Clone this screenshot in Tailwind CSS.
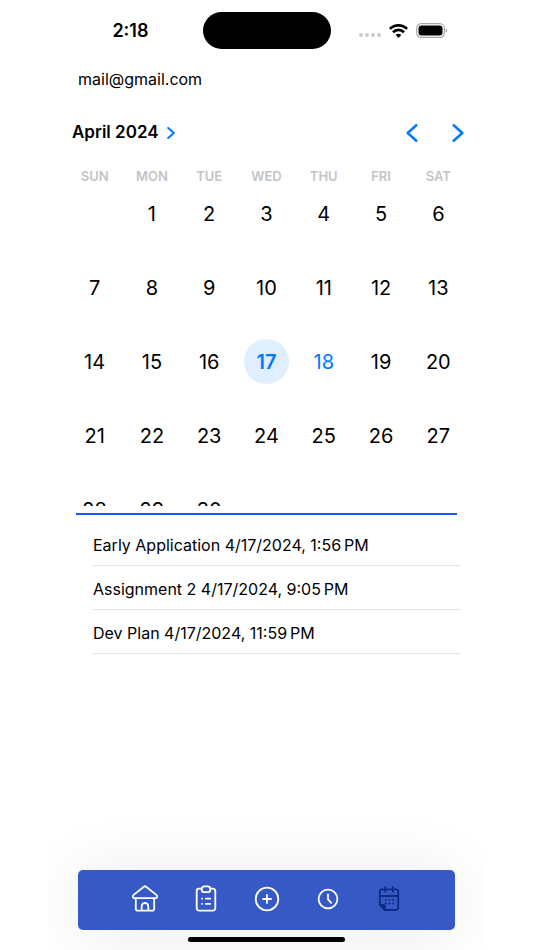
<!DOCTYPE html>
<html lang="en">
<head>
<meta charset="utf-8">
<meta name="viewport" content="width=device-width, initial-scale=1">
<title>Calendar</title>
<script src="https://cdn.jsdelivr.net/npm/@tailwindcss/browser@4"></script>
</head>
<body class="bg-white pr-[49px] pl-12 font-['Inter','Liberation_Sans',sans-serif] text-black">
<div class="flex min-h-screen flex-col overflow-hidden">

  <!-- Status bar -->
  <header class="grid grid-cols-[1fr_auto_1fr] items-center pt-3">
    <div class="pr-[54px] text-right text-lg font-semibold">2:18</div>
    <div class="h-[37px] w-32 rounded-full bg-black"></div>
    <div class="flex items-center gap-2 pl-7">
      <svg class="mt-2 h-1 w-[22px]" viewBox="0 0 22 4" fill="#cbcbcb" aria-hidden="true"><circle cx="2" cy="2" r="2"/><circle cx="8" cy="2" r="2"/><circle cx="14" cy="2" r="2"/><circle cx="20" cy="2" r="2"/></svg>
      <svg class="h-[14px] w-[19px]" viewBox="0 0 19 14" fill="none" stroke="#000" stroke-width="2.7" aria-hidden="true"><path d="M.9 4.9a12.3 12.3 0 0 1 17.2 0"/><path d="M4 8.2a7.8 7.8 0 0 1 11 0"/><path d="M9.5 14 6.7 11a4 4 0 0 1 5.6 0Z" fill="#000" stroke="none"/></svg>
      <svg class="h-[15px] w-8" viewBox="0 0 32 15" aria-hidden="true"><rect x=".7" y=".7" width="27.6" height="13.6" rx="4.6" fill="none" stroke="#a6a6a6" stroke-width="1.2"/><rect x="2.5" y="2.5" width="24" height="10" rx="3" fill="#000"/><path d="M29.6 5.2c2 .6 2 4 0 4.600Z" fill="#a6a6a6"/></svg>
    </div>
  </header>

  <p class="mt-[18px] pl-[30px] text-base leading-6">mail@gmail.com</p>

  <!-- Calendar -->
  <section class="px-[18px]">
    <div class="mt-[26px] flex h-8 items-center justify-between pr-[3px] pl-1.5">
      <button class="flex items-center gap-2 text-[17px] font-semibold">April 2024
        <svg class="h-3 w-2" viewBox="0 0 8 12" fill="none" stroke="#007aff" stroke-width="2" stroke-linecap="round" stroke-linejoin="round" aria-hidden="true"><path d="m1.200 1 5.600 5-5.600 5"/></svg>
      </button>
      <div class="flex gap-[34px]">
        <button aria-label="Previous month"><svg class="h-[18px] w-3" viewBox="0 0 12 18" fill="none" stroke="#007aff" stroke-width="2.500" stroke-linecap="round" stroke-linejoin="round"><path d="M10.300 1.300 1.700 9l8.600 7.700"/></svg></button>
        <button aria-label="Next month"><svg class="h-[18px] w-3" viewBox="0 0 12 18" fill="none" stroke="#007aff" stroke-width="2.500" stroke-linecap="round" stroke-linejoin="round"><path d="m1.700 1.300 8.600 7.700-8.600 7.700"/></svg></button>
      </div>
    </div>
    <div class="mt-[13px] h-[344px] overflow-hidden">
      <table class="w-full table-fixed text-center text-xl">
        <thead>
          <tr class="h-[29px] text-[13px] text-[#c4c4c6]">
            <th class="font-semibold">SUN</th><th class="font-semibold">MON</th><th class="font-semibold">TUE</th><th class="font-semibold">WED</th><th class="font-semibold">THU</th><th class="font-semibold">FRI</th><th class="font-semibold">SAT</th>
          </tr>
        </thead>
        <tbody>
          <tr class="h-[74px] align-top"><td></td><td><button class="size-[45px]">1</button></td><td><button class="size-[45px]">2</button></td><td><button class="size-[45px]">3</button></td><td><button class="size-[45px]">4</button></td><td><button class="size-[45px]">5</button></td><td><button class="size-[45px]">6</button></td></tr>
          <tr class="h-[74px] align-top"><td><button class="size-[45px]">7</button></td><td><button class="size-[45px]">8</button></td><td><button class="size-[45px]">9</button></td><td><button class="size-[45px]">10</button></td><td><button class="size-[45px]">11</button></td><td><button class="size-[45px]">12</button></td><td><button class="size-[45px]">13</button></td></tr>
          <tr class="h-[74px] align-top"><td><button class="size-[45px]">14</button></td><td><button class="size-[45px]">15</button></td><td><button class="size-[45px]">16</button></td><td><button class="size-[45px] rounded-full bg-[#e0efff] font-semibold text-[#007aff]">17</button></td><td><button class="size-[45px] text-[#007aff]">18</button></td><td><button class="size-[45px]">19</button></td><td><button class="size-[45px]">20</button></td></tr>
          <tr class="h-[74px] align-top"><td><button class="size-[45px]">21</button></td><td><button class="size-[45px]">22</button></td><td><button class="size-[45px]">23</button></td><td><button class="size-[45px]">24</button></td><td><button class="size-[45px]">25</button></td><td><button class="size-[45px]">26</button></td><td><button class="size-[45px]">27</button></td></tr>
          <tr class="h-[74px] align-top"><td><button class="size-[45px]">28</button></td><td><button class="size-[45px]">29</button></td><td><button class="size-[45px]">30</button></td><td></td><td></td><td></td><td></td></tr>
        </tbody>
      </table>
    </div>
  </section>

  <hr class="mx-7 mt-[7px] border-t-2 border-[#1a56ff]">

  <ul class="mt-[7px] mr-6 ml-[45px] text-base">
    <li class="flex h-11 items-center border-b border-[#e4e4e6] pt-0.5">Early Application 4/17/2024, 1:56&#8239;PM</li>
    <li class="flex h-11 items-center border-b border-[#e4e4e6] pt-0.5">Assignment 2 4/17/2024, 9:05&#8239;PM</li>
    <li class="flex h-11 items-center border-b border-[#e4e4e6] pt-0.5">Dev Plan 4/17/2024, 11:59&#8239;PM</li>
  </ul>

  <!-- Tab bar -->
  <footer class="mt-auto pb-2">
    <nav class="mx-[30px] flex h-[60px] items-center justify-center rounded-[5px] bg-[#3759c5] pb-[3px] text-white shadow-[0_4px_70px_rgba(0,0,0,0.09)]">
      <button class="flex w-[61px] justify-center" aria-label="Home"><svg class="size-[30px]" viewBox="0 0 30 30" fill="none" stroke="currentColor" stroke-width="1.800" stroke-linecap="round" stroke-linejoin="round"><path d="M13.900 2.700a1.700 1.700 0 0 1 2.200 0l10.300 8.200c1.400 1.200.9 3.300-.9 3.300h-21c-1.800 0-2.300-2.100-.9-3.300ZM5.800 14.200v10.500c0 1.200.7 1.900 1.900 1.900h14.600c1.200 0 1.900-.7 1.900-1.900V14.200M11.700 26.600v-4.300a3.300 3.300 0 0 1 6.600 0v4.300"/></svg></button>
      <button class="flex w-[61px] justify-center" aria-label="Tasks"><svg class="size-[30px]" viewBox="0 0 30 30" fill="none" stroke="currentColor" stroke-width="1.800" stroke-linecap="round" stroke-linejoin="round"><path d="M10.700 4.700H8a2.300 2.300 0 0 0-2.300 2.300v17.300A2.300 2.300 0 0 0 8 26.600h14a2.300 2.300 0 0 0 2.300-2.300V7A2.300 2.300 0 0 0 22 4.700h-2.700"/><rect x="10.700" y="2.400" width="8.600" height="5.800" rx="2.500"/><path d="M11 14.700h.1M14.800 14.700h4.400M11 19.800h.1M14.800 19.800h4.400"/></svg></button>
      <button class="flex w-[61px] justify-center" aria-label="Add"><svg class="size-[30px]" viewBox="0 0 30 30" fill="none" stroke="currentColor" stroke-width="1.800" stroke-linecap="round"><circle cx="15" cy="15" r="11.300"/><path d="M15 11v8M11 15h8"/></svg></button>
      <button class="flex w-[61px] justify-center" aria-label="History"><svg class="size-[30px]" viewBox="0 0 30 30" fill="none" stroke="currentColor" stroke-width="1.800" stroke-linecap="round" stroke-linejoin="round"><circle cx="15" cy="15" r="9.400"/><path d="M15 10.400v5l3.200 3.400"/></svg></button>
      <button class="flex w-[61px] justify-center text-[#102a86]" aria-label="Calendar" aria-current="page"><svg class="size-[30px]" viewBox="0 0 30 30" fill="none" stroke="currentColor" stroke-width="1.800" stroke-linecap="round" stroke-linejoin="round"><path d="M8 5.300h14a2.200 2.200 0 0 1 2.200 2.200v16.300a2.200 2.200 0 0 1-2.200 2.200H11l-5.200-5V7.500A2.200 2.200 0 0 1 8 5.300ZM5.800 12h18.400M11.200 3.200v4.500M18.900 3.200v4.500"/><path d="M5.800 21H9a2 2 0 0 1 2 2v3Z" fill="currentColor"/><path d="M11.700 16.100h.01M15.400 16.100h.01M19.100 16.100h.01M11.700 19.600h.01M15.400 19.600h.01M19.100 19.600h.01" stroke-width="2"/></svg></button>
    </nav>
    <div class="relative mx-auto mt-[7px] h-[5px] w-[157px] rounded-full bg-black"></div>
  </footer>
</div>
</body>
</html>
